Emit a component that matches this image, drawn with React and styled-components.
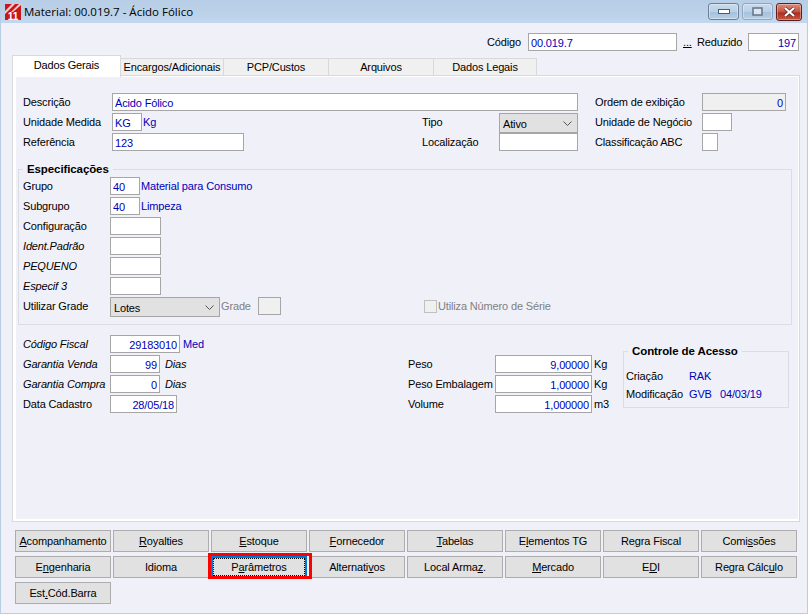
import React from "react";
import styled, { createGlobalStyle, css } from "styled-components";

const GlobalStyle = createGlobalStyle`
  html, body {
    margin: 0;
    padding: 0;
    background: #f0f1f8;
  }
  * {
    box-sizing: border-box;
  }
`;

const UI_FONT = `"Liberation Sans", Arial, sans-serif`;
const VALUE_BLUE = "#0000b8";
const TRACKING = "-0.15px";

const Window = styled.div`
  width: 808px;
  height: 614px;
  display: flex;
  flex-direction: column;
  background: #f0f1f8;
  border: 1px solid #b9cde3;
  border-top: 0;
  font-family: ${UI_FONT};
  font-size: 11px;
  letter-spacing: ${TRACKING};
  color: #000;
  overflow: hidden;
`;

const TitleBar = styled.header`
  height: 23px;
  flex: none;
  display: flex;
  align-items: center;
  padding-left: 4px;
  background: linear-gradient(#b7cee6, #bcd2e9 60%, #c3d8ee);
`;

const Logo = styled.svg`
  width: 16px;
  height: 16px;
  flex: none;
`;

const WindowTitle = styled.h1`
  margin: 0 0 0 3px;
  font-family: "Open Sans", sans-serif;
  font-size: 11.5px;
  font-weight: 400;
  letter-spacing: 0;
  flex: 1;
`;

const WindowControls = styled.div`
  display: flex;
  align-items: center;
  gap: 3px;
  margin-right: 5px;
`;

const ControlButton = styled.button`
  width: ${(p) => p.$w}px;
  height: ${(p) => (p.$close ? 18 : 17)}px;
  padding: 0;
  display: flex;
  align-items: center;
  justify-content: center;
  border: 1px solid ${(p) => (p.$close ? "#5c1e22" : p.$muted ? "#8ea6bf" : "#6c7f96")};
  border-radius: 3px;
  background: ${(p) =>
    p.$close
      ? "linear-gradient(#dd8d78, #c4523f 50%, #ad2d1e 55%, #c8583e)"
      : "linear-gradient(#c6daec, #b9d1e7 50%, #a5c1dc 55%, #b6cfe6)"};
  box-shadow: inset 0 0 0 1px rgba(255, 255, 255, 0.35);
`;

const Body = styled.main`
  flex: 1;
  display: flex;
  flex-direction: column;
  padding: 10px 7px 0 11px;
`;

const CodeBar = styled.div`
  height: 18px;
  flex: none;
  display: flex;
  align-items: center;
  justify-content: flex-end;
  padding-right: 1px;
`;

const DotsLink = styled.span`
  width: 20px;
  padding-left: 6px;
  text-decoration: underline;
`;

const TabStrip = styled.nav`
  height: 20px;
  margin-top: 4px;
  flex: none;
  display: flex;
  align-items: flex-end;
  position: relative;
  z-index: 1;
`;

const Tab = styled.div`
  width: ${(p) => p.$w}px;
  display: flex;
  align-items: center;
  justify-content: center;
  border: 1px solid #d9d9d9;
  ${(p) =>
    p.$active
      ? css`
          height: 22px;
          margin-bottom: -2px;
          padding-bottom: 3px;
          background: #fff;
          border-bottom: 0;
        `
      : css`
          height: 17px;
          margin-left: -1px;
          background: #f0f0f0;
          border-bottom: 0;
        `}
`;

const Panel = styled.section`
  height: 447px;
  flex: none;
  border: 1px solid #d9d9d9;
`;

const PanelInner = styled.div`
  height: 100%;
  padding-top: 16px;
  border: solid #fff;
  border-width: 1px 1px 2px 3px;
  background: #f0f1f8;
`;

const GeneralGrid = styled.div`
  display: grid;
  grid-template-columns: 399px 173px 1fr;
  grid-auto-rows: 18px;
  row-gap: 2px;
  padding-left: 7px;
`;

const Row = styled.div`
  height: 18px;
  display: flex;
  align-items: center;
  grid-column: ${(p) => p.$span || "auto"};
`;

const Label = styled.span`
  flex: none;
  width: ${(p) => (p.$w ? `${p.$w}px` : "auto")};
  margin-left: ${(p) => p.$ml || 0}px;
  font-style: ${(p) => (p.$italic ? "italic" : "normal")};
  color: ${(p) => (p.$disabled ? "#808080" : "inherit")};
  white-space: nowrap;
`;

const Value = styled.span`
  flex: none;
  margin-left: ${(p) => p.$ml || 0}px;
  color: ${VALUE_BLUE};
  white-space: nowrap;
`;

const Input = styled.input`
  flex: none;
  width: ${(p) => p.$w}px;
  height: 18px;
  padding: 1px 2px 0;
  border: 1px solid #a6a6a6;
  border-radius: 0;
  outline: 0;
  background: ${(p) => (p.$disabled ? "#f0f0f0" : "#fff")};
  color: ${VALUE_BLUE};
  font-family: ${UI_FONT};
  font-size: 11px;
  letter-spacing: ${TRACKING};
  text-align: ${(p) => (p.$right ? "right" : "left")};
`;

const Select = styled.div`
  flex: none;
  width: ${(p) => p.$w}px;
  height: 20px;
  position: relative;
  top: 1px;
  display: flex;
  align-items: center;
  justify-content: space-between;
  padding: 1px 5px 0 3px;
  border: 1px solid #a6a6a6;
  background: #e1e1e1;
`;

const Fieldset = styled.fieldset`
  margin: 11px 6px 0 2px;
  height: 163px;
  padding: 1px 4px 0;
  border: 1px solid #dcdde4;
`;

const Legend = styled.legend`
  margin-left: ${(p) => p.$ml || 0}px;
  padding: 0 4px;
  font-weight: 700;
  font-size: 11.5px;
  letter-spacing: -0.1px;
  line-height: 14px;
`;

const Stack = styled.div`
  display: flex;
  flex-direction: column;
  gap: 2px;
`;

const CheckBox = styled.span`
  flex: none;
  width: 13px;
  height: 13px;
  margin-left: 143px;
  margin-right: 1px;
  border: 1px solid #c0c0c0;
  background: #f0f0f0;
`;

const Lower = styled.div`
  display: flex;
  align-items: flex-start;
  margin-top: 10px;
  padding-left: 7px;
`;

const FiscalColumn = styled(Stack)`
  width: 385px;
`;

const WeightColumn = styled(Stack)`
  width: 215px;
  margin-top: 20px;
`;

const AccessBox = styled.fieldset`
  width: 166px;
  height: 64px;
  margin: 9px 0 0;
  padding: 9px 0 0 2px;
  border: 1px solid #dcdde4;
`;

const AccessGrid = styled.div`
  display: grid;
  grid-template-columns: 63px 31px auto;
  grid-auto-rows: 18px;
  align-items: center;
`;

const ButtonGrid = styled.div`
  display: grid;
  grid-template-columns: repeat(8, 96px);
  grid-auto-rows: 22px;
  gap: 4px 2px;
  margin: 8px 0 0 3px;
`;

const ActionButton = styled.button`
  position: relative;
  padding: 0;
  border: 1px solid #adadad;
  border-radius: 0;
  background: #e1e1e1;
  color: #000;
  font-family: ${UI_FONT};
  font-size: 11px;
  letter-spacing: ${TRACKING};
  ${(p) =>
    p.$focused &&
    css`
      z-index: 2;
      border: 2px solid #0078d7;
      &::before {
        content: "";
        position: absolute;
        inset: 0;
        border: 1px dotted #000;
      }
      &::after {
        content: "";
        position: absolute;
        inset: -5px -7px -3px -5px;
        border: 3px solid #f00;
      }
    `}
`;

const BUTTONS = [
  ["", "A", "companhamento"],
  ["", "R", "oyalties"],
  ["", "E", "stoque"],
  ["", "F", "ornecedor"],
  ["", "T", "abelas"],
  ["E", "l", "ementos TG"],
  ["Re", "g", "ra Fiscal"],
  ["Comi", "s", "sões"],
  ["E", "n", "genharia"],
  ["Idioma", "", ""],
  ["P", "a", "râmetros", true],
  ["Alternati", "v", "os"],
  ["Local Arma", "z", "."],
  ["", "M", "ercado"],
  ["E", "D", "I"],
  ["Regra Cálc", "u", "lo"],
  ["Est", ".", "Cód.Barra"],
];

const TABS = [
  ["Encargos/Adicionais", 104],
  ["PCP/Custos", 106],
  ["Arquivos", 106],
  ["Dados Legais", 104],
];

const Chevron = () => (
  <svg width="9" height="5" viewBox="0 0 9 5" fill="none" stroke="#555" strokeWidth="1">
    <path d="M0.5 0.5 L4.5 4.5 L8.5 0.5" />
  </svg>
);

const App = () => {
  return (
    <>
      <GlobalStyle />
      <Window>
        <TitleBar>
          <Logo viewBox="0 0 16 16">
            <rect width="16" height="16" fill="#c8161d" />
            <path d="M0 7 L7 0 H10 L0 10 Z M6 8 L14 0 H16 V1 L8 8 Z" fill="#f4c9c9" />
            <text x="8" y="15.5" textAnchor="middle" fontFamily="Liberation Sans" fontWeight="700" fontSize="10" fill="#fff">
              11
            </text>
          </Logo>
          <WindowTitle>Material: 00.019.7 - Ácido Fólico</WindowTitle>
          <WindowControls>
            <ControlButton $w={31}>
              <svg width="12" height="5"><rect x="0.5" y="0.5" width="11" height="4" fill="#fff" stroke="#4d5c6d" /></svg>
            </ControlButton>
            <ControlButton $w={31} $muted>
              <svg width="11" height="9"><rect x="1" y="1" width="9" height="7" fill="#dbe6f1" stroke="#6a7a8c" strokeWidth="1.6" /></svg>
            </ControlButton>
            <ControlButton $w={26} $close>
              <svg width="13" height="10" viewBox="0 0 13 10">
                <path d="M2 1 L11 9 M11 1 L2 9" stroke="#4d2a2a" strokeWidth="3.4" />
                <path d="M2 1 L11 9 M11 1 L2 9" stroke="#fff" strokeWidth="2.2" />
              </svg>
            </ControlButton>
          </WindowControls>
        </TitleBar>

        <Body>
          <CodeBar>
            <Label $w={41}>Código</Label>
            <Input $w={149} readOnly value="00.019.7" />
            <DotsLink>...</DotsLink>
            <Label $w={51}>Reduzido</Label>
            <Input $w={51} $right readOnly value="197" />
          </CodeBar>

          <TabStrip>
            <Tab $active $w={109}>Dados Gerais</Tab>
            {TABS.map(([name, width]) => (
              <Tab key={name} $w={width}>{name}</Tab>
            ))}
          </TabStrip>

          <Panel>
            <PanelInner>
              <GeneralGrid>
                <Row $span="span 2">
                  <Label $w={89}>Descrição</Label>
                  <Input $w={466} readOnly value="Ácido Fólico" />
                </Row>
                <Row>
                  <Label $w={107}>Ordem de exibição</Label>
                  <Input $w={84} $right $disabled readOnly value="0" />
                </Row>
                <Row>
                  <Label $w={89}>Unidade Medida</Label>
                  <Input $w={30} readOnly value="KG" />
                  <Value $ml={1}>Kg</Value>
                </Row>
                <Row>
                  <Label $w={77}>Tipo</Label>
                  <Select $w={79}>
                    Ativo
                    <Chevron />
                  </Select>
                </Row>
                <Row>
                  <Label $w={107}>Unidade de Negócio</Label>
                  <Input $w={30} readOnly value="" />
                </Row>
                <Row>
                  <Label $w={89}>Referência</Label>
                  <Input $w={132} readOnly value="123" />
                </Row>
                <Row>
                  <Label $w={77}>Localização</Label>
                  <Input $w={79} readOnly value="" />
                </Row>
                <Row>
                  <Label $w={107}>Classificação ABC</Label>
                  <Input $w={16} readOnly value="" />
                </Row>
              </GeneralGrid>

              <Fieldset>
                <Legend>Especificações</Legend>
                <Stack>
                  <Row>
                    <Label $w={87}>Grupo</Label>
                    <Input $w={30} readOnly value="40" />
                    <Value $ml={1}>Material para Consumo</Value>
                  </Row>
                  <Row>
                    <Label $w={87}>Subgrupo</Label>
                    <Input $w={30} readOnly value="40" />
                    <Value $ml={1}>Limpeza</Value>
                  </Row>
                  <Row>
                    <Label $w={87}>Configuração</Label>
                    <Input $w={51} readOnly value="" />
                  </Row>
                  <Row>
                    <Label $w={87} $italic>Ident.Padrão</Label>
                    <Input $w={51} readOnly value="" />
                  </Row>
                  <Row>
                    <Label $w={87} $italic>PEQUENO</Label>
                    <Input $w={51} readOnly value="" />
                  </Row>
                  <Row>
                    <Label $w={87} $italic>Especif 3</Label>
                    <Input $w={51} readOnly value="" />
                  </Row>
                  <Row>
                    <Label $w={87}>Utilizar Grade</Label>
                    <Select $w={110}>
                      Lotes
                      <Chevron />
                    </Select>
                    <Label $w={37} $ml={1} $disabled>Grade</Label>
                    <Input $w={23} $disabled readOnly value="" />
                    <CheckBox />
                    <Label $disabled>Utiliza Número de Série</Label>
                  </Row>
                </Stack>
              </Fieldset>

              <Lower>
                <FiscalColumn>
                  <Row>
                    <Label $w={87} $italic>Código Fiscal</Label>
                    <Input $w={70} $right readOnly value="29183010" />
                    <Value $ml={3}>Med</Value>
                  </Row>
                  <Row>
                    <Label $w={87} $italic>Garantia Venda</Label>
                    <Input $w={50} $right readOnly value="99" />
                    <Label $ml={5} $italic>Dias</Label>
                  </Row>
                  <Row>
                    <Label $w={87} $italic>Garantia Compra</Label>
                    <Input $w={50} $right readOnly value="0" />
                    <Label $ml={5} $italic>Dias</Label>
                  </Row>
                  <Row>
                    <Label $w={87}>Data Cadastro</Label>
                    <Input $w={67} $right readOnly value="28/05/18" />
                  </Row>
                </FiscalColumn>

                <WeightColumn>
                  <Row>
                    <Label $w={87}>Peso</Label>
                    <Input $w={97} $right readOnly value="9,00000" />
                    <Label $ml={2}>Kg</Label>
                  </Row>
                  <Row>
                    <Label $w={87}>Peso Embalagem</Label>
                    <Input $w={97} $right readOnly value="1,00000" />
                    <Label $ml={2}>Kg</Label>
                  </Row>
                  <Row>
                    <Label $w={87}>Volume</Label>
                    <Input $w={97} $right readOnly value="1,000000" />
                    <Label $ml={2}>m3</Label>
                  </Row>
                </WeightColumn>

                <AccessBox>
                  <Legend $ml={2}>Controle de Acesso</Legend>
                  <AccessGrid>
                    <span>Criação</span>
                    <Value>RAK</Value>
                    <span />
                    <span>Modificação</span>
                    <Value>GVB</Value>
                    <Value>04/03/19</Value>
                  </AccessGrid>
                </AccessBox>
              </Lower>
            </PanelInner>
          </Panel>

          <ButtonGrid>
            {BUTTONS.map(([before, key, after, focused]) => (
              <ActionButton key={before + key + after} $focused={focused}>
                {before}
                <u>{key}</u>
                {after}
              </ActionButton>
            ))}
          </ButtonGrid>
        </Body>
      </Window>
    </>
  );
};

export default App;
